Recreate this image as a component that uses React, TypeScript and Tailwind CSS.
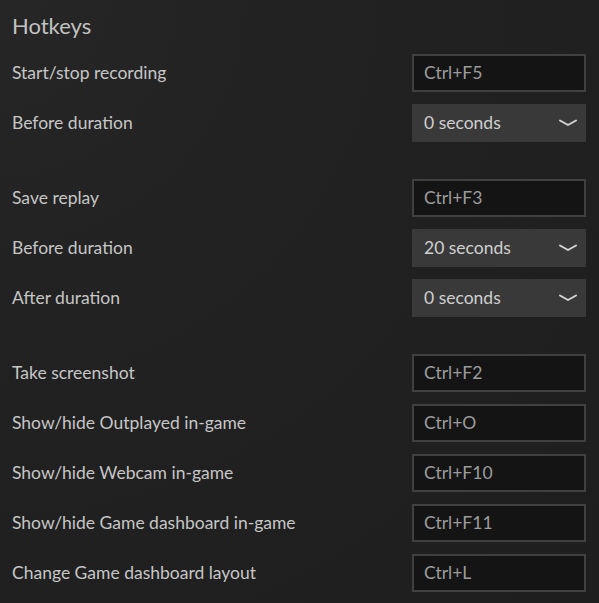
import React from 'react';

type Row =
  | { label: string; kind: 'key'; value: string }
  | { label: string; kind: 'select'; value: string };

const groups: Row[][] = [
  [
    { label: 'Start/stop recording', kind: 'key', value: 'Ctrl+F5' },
    { label: 'Before duration', kind: 'select', value: '0 seconds' },
  ],
  [
    { label: 'Save replay', kind: 'key', value: 'Ctrl+F3' },
    { label: 'Before duration', kind: 'select', value: '20 seconds' },
    { label: 'After duration', kind: 'select', value: '0 seconds' },
  ],
  [
    { label: 'Take screenshot', kind: 'key', value: 'Ctrl+F2' },
    { label: 'Show/hide Outplayed in-game', kind: 'key', value: 'Ctrl+O' },
    { label: 'Show/hide Webcam in-game', kind: 'key', value: 'Ctrl+F10' },
    { label: 'Show/hide Game dashboard in-game', kind: 'key', value: 'Ctrl+F11' },
    { label: 'Change Game dashboard layout', kind: 'key', value: 'Ctrl+L' },
  ],
];

function Chevron() {
  return (
    <svg width="18" height="8" viewBox="0 0 18 8" fill="none">
      <path d="M1 1.5 L9 6 L17 1.5" stroke="#d4d4d4" strokeWidth="2" strokeLinecap="round" strokeLinejoin="round" />
    </svg>
  );
}

function HotkeyRow({ row }: { row: Row }) {
  return (
    <div className="flex h-[50px] items-center justify-between">
      <span className="text-[17.5px] text-[#c6c6c6]">{row.label}</span>
      {row.kind === 'key' ? (
        <div className="flex h-[38px] w-[174px] items-center border-2 border-[#404040] bg-[#141414] px-[10px] text-[17.5px] text-[#9c9c9c]">
          {row.value}
        </div>
      ) : (
        <div className="flex h-[38px] w-[174px] items-center justify-between bg-[#393939] pl-3 pr-[9px] text-[17.5px] text-[#cfcfcf]">
          <span>{row.value}</span>
          <Chevron />
        </div>
      )}
    </div>
  );
}

export default function App() {
  return (
    <div
      className="h-[603px] w-[599px] overflow-hidden bg-[radial-gradient(ellipse_at_top_left,#262626_0%,#212121_45%,#1e1e1e_100%)] pl-3 pr-[13px]"
      style={{ fontFamily: 'Lato, "Open Sans", sans-serif' }}
    >
      <div className="flex h-12 items-center pt-[3px]">
        <h1 className="text-[22px] font-normal text-[#c2c2c2]">Hotkeys</h1>
      </div>
      {groups.map((group, gi) => (
        <div key={gi} className={gi > 0 ? 'mt-[25px]' : ''}>
          {group.map((row, ri) => (
            <HotkeyRow key={ri} row={row} />
          ))}
        </div>
      ))}
    </div>
  );
}
